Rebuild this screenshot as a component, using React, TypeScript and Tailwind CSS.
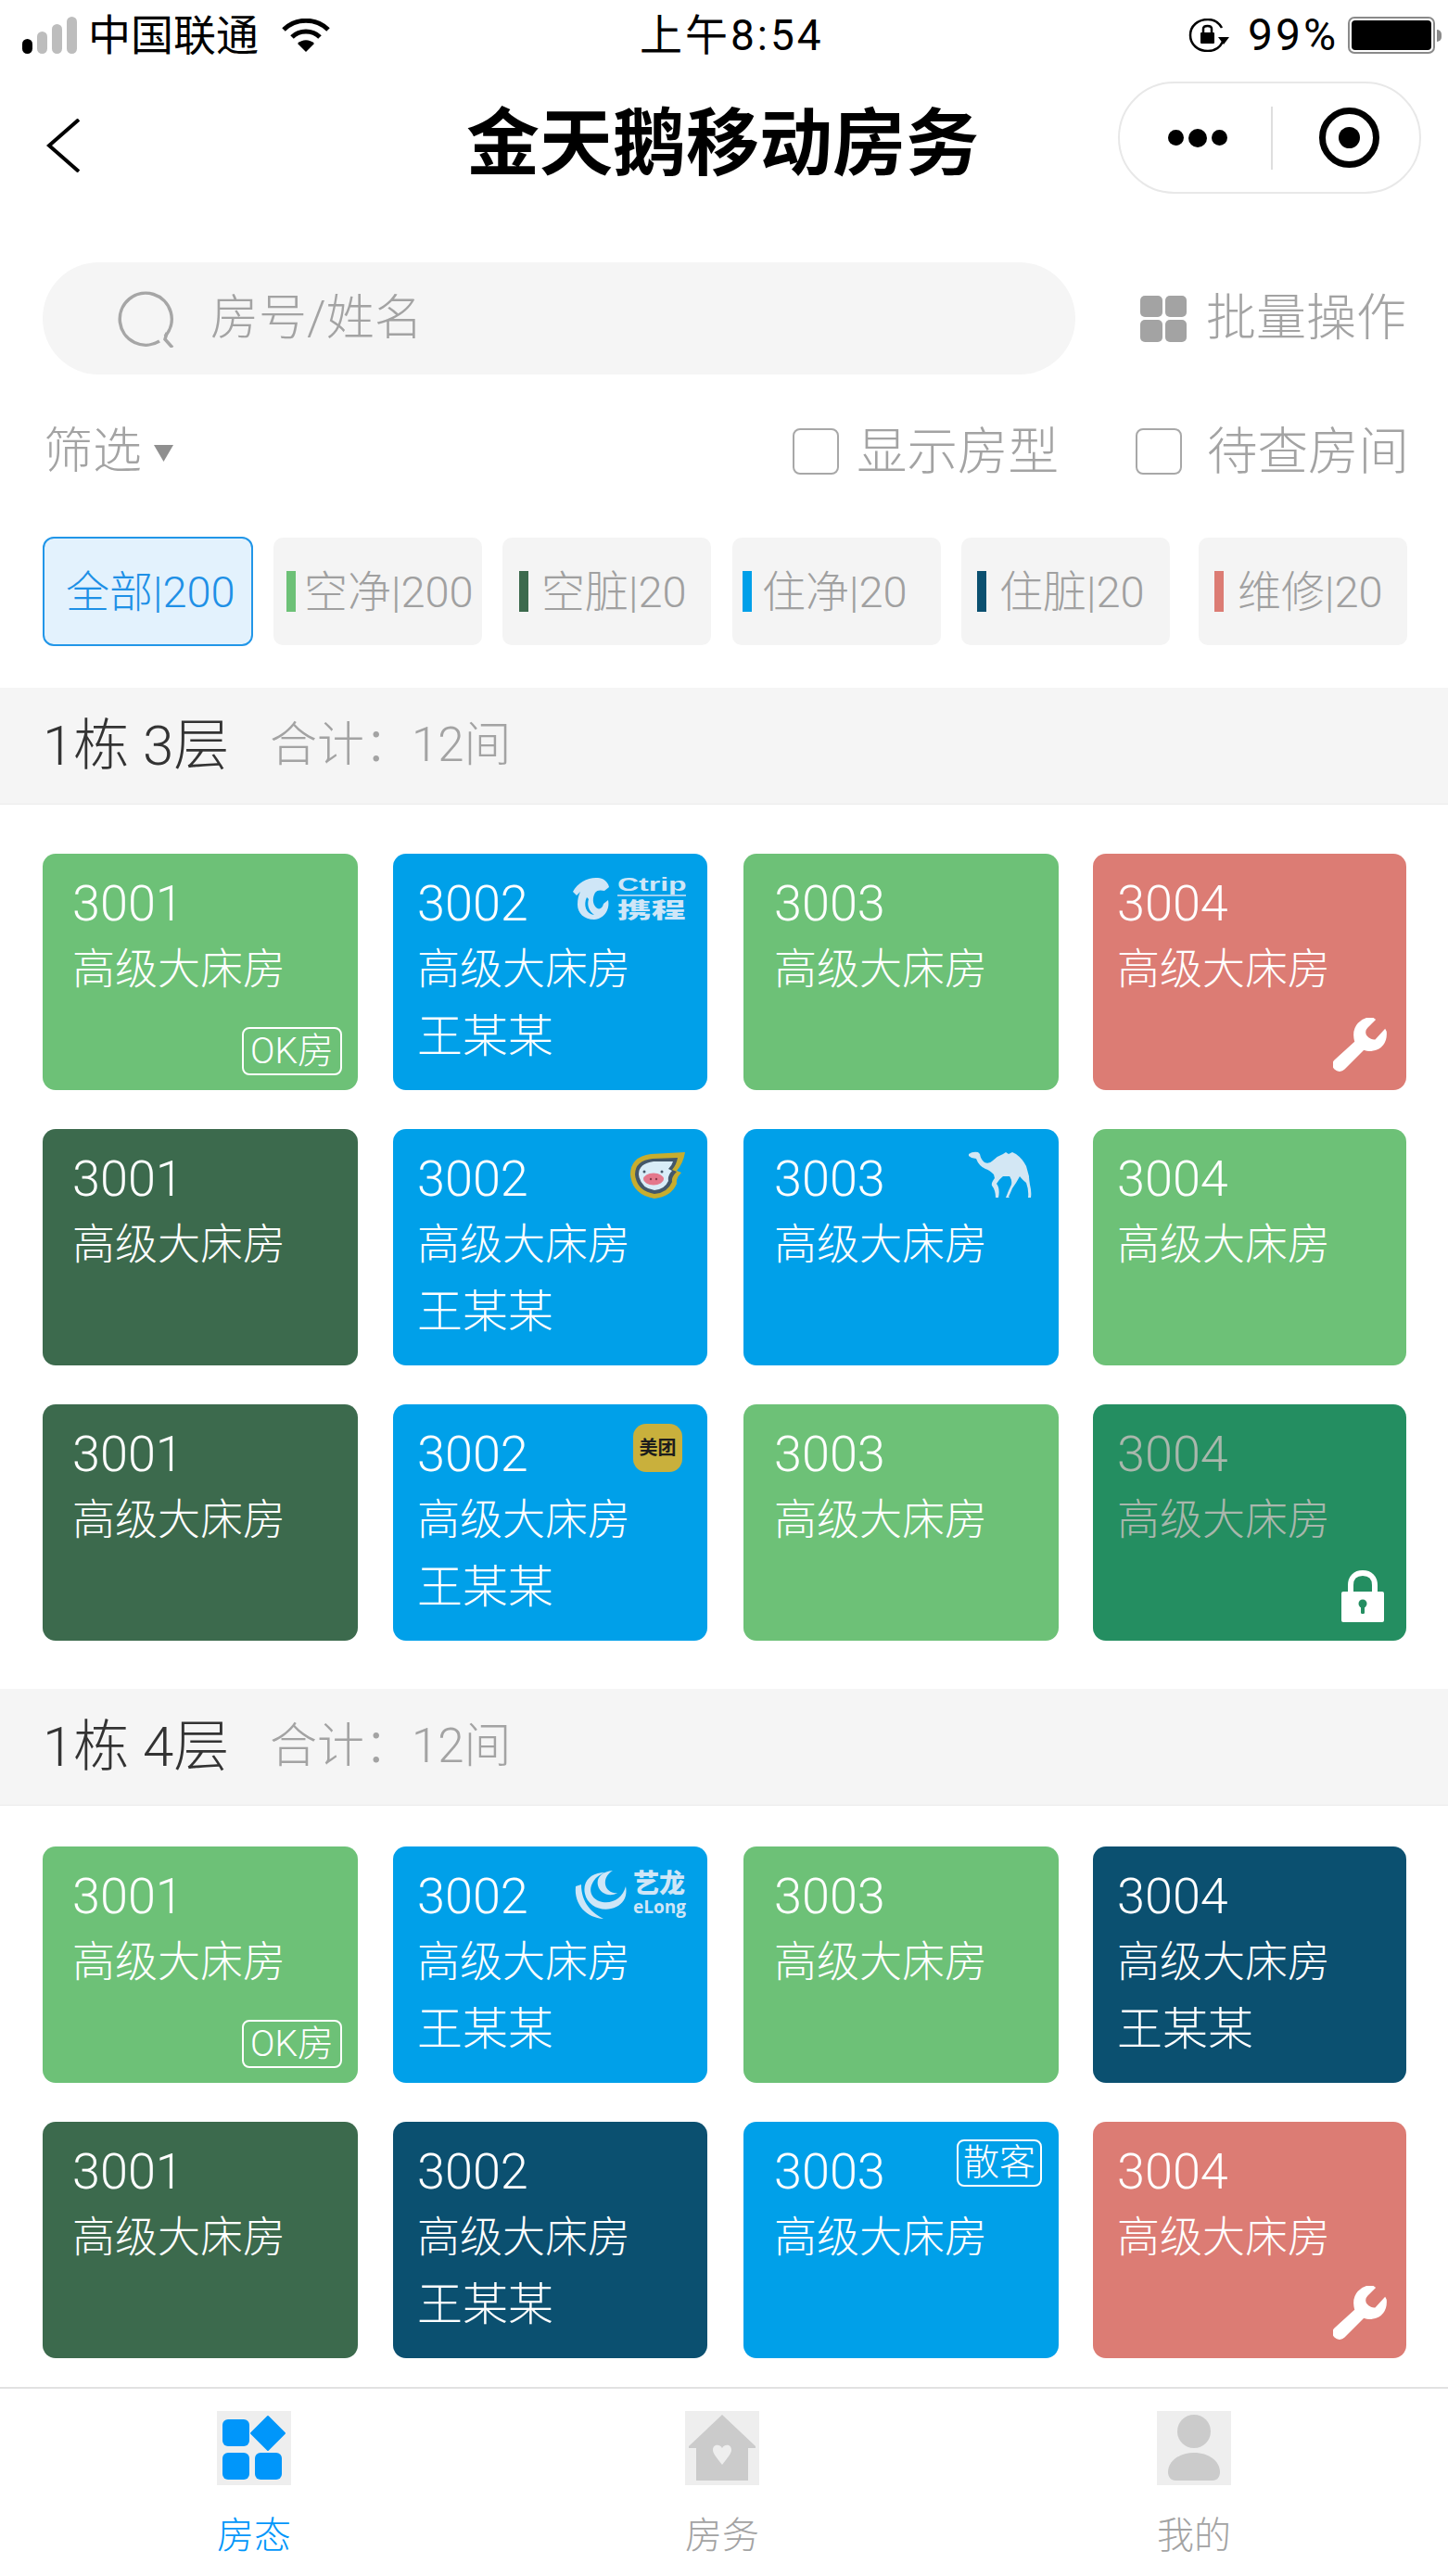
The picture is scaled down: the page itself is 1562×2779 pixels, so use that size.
import React from "react";

const cols = ["w-[340px] pl-[32px]", "w-[339px] pl-[26px]", "w-[340px] pl-[33px]", "w-[338px] pl-[26px]"];

function Wrench() {
  return (
    <svg viewBox="0 0 58 58" className="absolute right-[21px] bottom-[20px] w-[58px] h-[58px]">
      <path
        d="M40 0 C30 1 22 9 23 20 C23 23 24 25 24 26 L2 46 C-1 49 0 53 2 55 C5 58 9 58 12 55 L33 34 C36 35 39 36 42 35 C52 34 58 26 57 15 L56 13 L46 24 C43 25 38 23 36 20 C34 17 34 13 37 10 L45 2 C44 1 42 0 40 0 Z"
        fill="#fff"
        stroke="#fff"
        strokeWidth="1.5"
      />
    </svg>
  );
}

function Lock() {
  return (
    <svg viewBox="0 0 46 57" className="absolute right-[24px] bottom-[20px] w-[46px] h-[57px]">
      <path d="M10 26 V17 C10 9 15 4 23 4 C31 4 36 9 36 17 V26" fill="none" stroke="#fff" strokeWidth="6" />
      <rect x="0" y="24" width="46" height="33" rx="2" fill="#fff" />
      <circle cx="23" cy="37" r="4.5" fill="#248e61" />
      <rect x="21" y="38" width="4" height="10" rx="1.5" fill="#248e61" />
    </svg>
  );
}

function Ctrip() {
  return (
    <div className="absolute top-[25px] right-[22px] w-[124px] h-[46px] text-[#cfe6f7]">
      <svg viewBox="0 0 42 46" className="absolute left-0 top-0 w-[42px] h-[46px]">
        <path
          d="M1 16 C6 6 18 0 28 1 C33 1 39 5 40 11 L35 15 C31 14 27 14 25 17 C22 22 22 29 26 33 C29 36 33 34 34 29 L39 25 C41 34 36 45 24 46 C13 46 6 39 6 30 C6 24 7 20 9 16 L5 20 Z"
          fill="#cfe6f7"
        />
        <path d="M16 22 C12 30 15 40 24 41 C18 37 16 30 18 24 Z" fill="#00a0e9" />
      </svg>
      <span className="absolute left-[49px] top-0 text-[20px] leading-[17px] font-bold font-['Liberation_Sans',sans-serif] origin-left scale-x-[1.6]">Ctrip</span>
      <div className="absolute left-[49px] top-[19px] w-[74px] h-[2px] bg-[#9fd2f2]" />
      <span className="absolute left-[49px] top-[22px] text-[23px] leading-[24px] font-black font-['Noto_Sans_CJK_SC',sans-serif] origin-left scale-x-[1.6] whitespace-nowrap">携程</span>
    </div>
  );
}

function Elong() {
  return (
    <div className="absolute top-[25px] right-[22px] w-[122px] h-[54px] text-[#cfe6f7]">
      <svg viewBox="0 0 60 54" className="absolute left-0 top-0 w-[60px] h-[54px]">
        <path d="M2 18 C0 38 14 52 32 53 C20 47 8 36 8 16 Z" fill="#cfe6f7" />
        <path d="M34 3 C18 3 9 13 12 26 C15 40 32 47 46 40 C54 36 58 28 56 18 C53 30 42 37 31 35 C21 33 16 25 19 17 C22 9 28 5 34 3 Z" fill="#cfe6f7" />
        <path d="M42 1 C30 2 24 9 26 17 C28 26 39 30 47 25 C41 26 35 22 34 16 C33 9 37 4 42 1 Z" fill="#cfe6f7" />
      </svg>
      <span className="absolute left-[64px] -top-[1px] text-[28px] leading-[28px] font-black font-['Noto_Sans_CJK_SC',sans-serif] whitespace-nowrap">艺龙</span>
      <span className="absolute left-[64px] top-[28px] text-[19px] leading-[24px] font-bold font-['Open_Sans',sans-serif]">eLong</span>
    </div>
  );
}

function Pig() {
  const wing = "M59 0 L22 2 Q0 5 0 24 Q2 46 26 50 Q44 48 50 34 Q49 28 55 22 L50 20 Q57 12 59 0 Z";
  return (
    <svg viewBox="0 0 60 50" className="absolute top-[25px] right-[23px] w-[60px] h-[50px]">
      <path d={wing} fill="#c8ad2e" />
      <path d="M51 6 L24 7 Q5 9 5 24 Q7 42 26 45 Q40 44 45 32 Q44 27 50 21 L45 19 Q50 13 51 6 Z" fill="#44586a" />
      <path d="M46 10 L25 10 Q9 12 9 24 Q11 39 26 41 Q37 40 41 31 Q40 25 45 20 L41 18 Q45 14 46 10 Z" fill="#d9edf8" />
      <ellipse cx="25" cy="29" rx="11" ry="6.5" fill="#e4788c" />
      <circle cx="15" cy="21" r="1.5" fill="#44586a" />
      <circle cx="34" cy="21" r="1.5" fill="#44586a" />
      <circle cx="22" cy="29" r="1.2" fill="#8b3a4b" />
      <circle cx="28" cy="29" r="1.2" fill="#8b3a4b" />
    </svg>
  );
}

function Camel() {
  return (
    <svg viewBox="0 0 68 50" className="absolute top-[24px] right-[29px] w-[68px] h-[50px]">
      <path
        d="M0 3 Q4 0 10 1 L12 3 Q13 9 17 12 Q22 14 26 10 Q31 5 37 3 L40 1 L43 3 L47 1 L51 3 Q58 8 62 16 L65 27 Q65 30 66 36 Q68 44 67 50 L64 50 Q65 42 62 34 Q58 31 55 27 Q52 33 47 40 Q45 45 43 49 L44 50 L40 50 Q43 42 46 36 Q47 31 44 27 L37 27 Q33 30 30 35 Q34 40 32 50 L29 50 Q29 42 25 37 Q24 34 28 29 L27 25 Q22 20 18 19 Q11 16 8 8 L3 7 L0 5 Z"
        fill="#d3e7f4"
      />
    </svg>
  );
}

function Meituan() {
  return (
    <div className="absolute top-[21px] right-[27px] w-[53px] h-[52px] rounded-[14px] bg-[#c9b03c] flex items-center justify-center text-[#1d1d1d] text-[20px] font-bold leading-none whitespace-nowrap">
      美团
    </div>
  );
}

function OutlineBadge({ text, place }: { text: string; place: string }) {
  return (
    <div className={`absolute ${place} border-2 border-white rounded-[8px] flex items-center justify-center text-white text-[39px] leading-none whitespace-nowrap`}>
      {text}
    </div>
  );
}

type CardData = { no: string; bg: string; name?: boolean; extra?: React.ReactNode; dim?: boolean };

function Card({ no, bg, name, extra, dim, col }: CardData & { col: number }) {
  return (
    <div className={`relative h-[255px] rounded-[14px] pt-[18px] ${bg} ${cols[col]} ${dim ? "text-[#a9b7ac]" : "text-white"}`}>
      <div className="h-[71px] leading-[71px] text-[54px]">{no}</div>
      <div className="h-[71px] leading-[71px] text-[46px]">高级大床房</div>
      {name && <div className="h-[71px] leading-[71px] text-[49px] mt-[2px]">王某某</div>}
      {extra}
    </div>
  );
}

const G = "bg-[#6dc177]";
const B = "bg-[#00a0e9]";
const D = "bg-[#3c6a4d]";
const N = "bg-[#0b5070]";
const R = "bg-[#dc7c74]";

const ok = <OutlineBadge text="OK房" place="right-[17px] bottom-[16px] w-[108px] h-[52px]" />;

const floor1: CardData[] = [
  { no: "3001", bg: G, extra: ok },
  { no: "3002", bg: B, name: true, extra: <Ctrip /> },
  { no: "3003", bg: G },
  { no: "3004", bg: R, extra: <Wrench /> },
  { no: "3001", bg: D },
  { no: "3002", bg: B, name: true, extra: <Pig /> },
  { no: "3003", bg: B, extra: <Camel /> },
  { no: "3004", bg: G },
  { no: "3001", bg: D },
  { no: "3002", bg: B, name: true, extra: <Meituan /> },
  { no: "3003", bg: G },
  { no: "3004", bg: "bg-[#248e61]", dim: true, extra: <Lock /> },
];

const floor2: CardData[] = [
  { no: "3001", bg: G, extra: ok },
  { no: "3002", bg: B, name: true, extra: <Elong /> },
  { no: "3003", bg: G },
  { no: "3004", bg: N, name: true },
  { no: "3001", bg: D },
  { no: "3002", bg: N, name: true },
  { no: "3003", bg: B, extra: <OutlineBadge text="散客" place="right-[18px] top-[19px] w-[92px] h-[51px]" /> },
  { no: "3004", bg: R, extra: <Wrench /> },
];

function Section({ title, cards, gridPad }: { title: string; cards: CardData[]; gridPad: string }) {
  return (
    <section>
      <div className="h-[126px] bg-[#f5f5f5] border-b border-[#ebebeb] pl-[46px] flex items-center">
        <span className="text-[60px] text-[#333] w-[245px] whitespace-pre">{title}</span>
        <span className="text-[51px] text-[#a3a3a3]">合计：12间</span>
      </div>
      <div className={`pl-[46px] ${gridPad} grid grid-cols-[378px_378px_377px_338px] gap-y-[42px]`}>
        {cards.map((c, i) => (
          <Card key={i} {...c} col={i % 4} />
        ))}
      </div>
    </section>
  );
}

const tabs = [
  { label: "空净|200", bar: "bg-[#6dc177]", cls: "ml-[22px] pl-[14px] gap-[9px]" },
  { label: "空脏|20", bar: "bg-[#3c6a4d]", cls: "ml-[22px] pl-[18px] gap-[14px]" },
  { label: "住净|20", bar: "bg-[#00a0e9]", cls: "ml-[23px] pl-[11px] gap-[11px]" },
  { label: "住脏|20", bar: "bg-[#0b5070]", cls: "ml-[22px] pl-[17px] gap-[14px]" },
  { label: "维修|20", bar: "bg-[#dc7c74]", cls: "ml-[31px] pl-[17px] gap-[15px]" },
];

function StatusBar() {
  return (
    <div className="h-[76px] relative flex items-center justify-between pl-[24px] pr-[7px] text-black text-[46px] font-normal">
      <div className="flex items-center">
        <div className="flex items-end gap-[5px] h-[40px] mr-[12px]">
          <div className="w-[11px] h-[16px] rounded-full bg-black" />
          <div className="w-[11px] h-[24px] rounded-full bg-[#bdbdbd]" />
          <div className="w-[11px] h-[32px] rounded-full bg-[#bdbdbd]" />
          <div className="w-[11px] h-[40px] rounded-full bg-[#bdbdbd]" />
        </div>
        <span className="leading-none">中国联通</span>
        <svg viewBox="0 0 54 36" className="w-[54px] h-[36px] ml-[24px]">
          <path d="M3 12 C16 -1 38 -1 51 12" fill="none" stroke="#000" strokeWidth="5" />
          <path d="M12 20 C20 12 34 12 42 20" fill="none" stroke="#000" strokeWidth="5" />
          <path d="M27 36 L18 27 C23 22 31 22 36 27 Z" fill="#000" />
        </svg>
      </div>
      <span className="absolute left-[690px] leading-none tracking-[3px]">上午8:54</span>
      <div className="flex items-center">
        <svg viewBox="0 0 44 36" className="w-[44px] h-[36px] mr-[20px]">
          <path d="M36 10 C32 3 26 1 21 1 C10 1 2 8 2 18 C2 28 10 35 21 35 C28 35 34 31 37 25" fill="none" stroke="#000" strokeWidth="2.5" />
          <rect x="13" y="15" width="15" height="12" rx="1" fill="#000" />
          <path d="M16 15 V11 C16 7 25 7 25 11 V15" fill="none" stroke="#000" strokeWidth="2.5" />
          <path d="M32 20 L44 20 L38 28 Z" fill="#000" />
        </svg>
        <span className="leading-none text-[48px] w-[108px] tracking-[3px]">99%</span>
        <div className="w-[94px] h-[40px] rounded-[7px] border-2 border-[#8a8a8a] p-[2px]">
          <div className="w-full h-full rounded-[4px] bg-black" />
        </div>
        <div className="w-[5px] h-[13px] ml-[2px] rounded-r-full bg-[#8a8a8a]" />
      </div>
    </div>
  );
}

function NavBar() {
  return (
    <div className="h-[144px] relative flex items-center justify-center">
      <svg viewBox="0 0 36 58" className="absolute left-[50px] top-[52px] w-[36px] h-[58px]">
        <path d="M35 1 L3 29 L35 57" fill="none" stroke="#000" strokeWidth="4" />
      </svg>
      <h1 className="text-[79px] font-bold text-black leading-none font-['Noto_Sans_CJK_SC',sans-serif] pr-[3px]">金天鹅移动房务</h1>
      <div className="absolute right-[29px] top-[12px] w-[327px] h-[121px] rounded-full border-2 border-[#e8e8e8] flex items-center pl-[52px]">
        <div className="flex items-center gap-[5px] w-[111px]">
          <div className="w-[17px] h-[17px] rounded-full bg-black" />
          <div className="w-[20px] h-[20px] rounded-full bg-black" />
          <div className="w-[17px] h-[17px] rounded-full bg-black" />
        </div>
        <div className="w-[2px] h-[68px] bg-[#dedede]" />
        <div className="ml-[50px] w-[65px] h-[65px] rounded-full border-[7px] border-black flex items-center justify-center">
          <div className="w-[23px] h-[23px] rounded-full bg-black" />
        </div>
      </div>
    </div>
  );
}

function NavItem({ label, active, children, cls }: { label: string; active?: boolean; children: React.ReactNode; cls: string }) {
  return (
    <div className={`absolute top-[24px] ${cls} w-[80px] flex flex-col items-center`}>
      <svg viewBox="0 0 80 80" className="w-[80px] h-[80px] bg-[#eeeeee]">
        {children}
      </svg>
      <span className={`mt-[30px] text-[40px] leading-[50px] whitespace-nowrap ${active ? "text-[#0096fa]" : "text-[#a3a3a3]"}`}>{label}</span>
    </div>
  );
}

export default function App() {
  return (
    <div className="w-[1562px] h-[2779px] bg-white overflow-hidden flex flex-col font-light font-[Roboto,'Noto_Sans_CJK_SC',sans-serif]">
      <StatusBar />
      <NavBar />

      <div className="pl-[46px] pr-[40px] mt-[63px] flex items-center">
        <div className="w-[1114px] h-[121px] rounded-full bg-[#f5f5f5] flex items-center pl-[80px]">
          <svg viewBox="0 0 62 62" className="w-[62px] h-[62px]">
            <path d="M46 55 A28 28 0 1 1 52 50" fill="none" stroke="#a6a6a6" strokeWidth="3.5" />
            <path d="M54 46 L52 53 L60 62" fill="none" stroke="#a6a6a6" strokeWidth="3.5" />
          </svg>
          <span className="ml-[39px] text-[52px] text-[#a3a3a3] leading-none">房号/姓名</span>
        </div>
        <div className="ml-[70px] grid grid-cols-2 gap-[3px] w-[50px] h-[50px]">
          <div className="rounded-[5px] bg-[#a3a3a3]" />
          <div className="rounded-[5px] bg-[#a3a3a3]" />
          <div className="rounded-[5px] bg-[#a3a3a3]" />
          <div className="rounded-[5px] bg-[#a3a3a3]" />
        </div>
        <span className="ml-[21px] text-[54px] text-[#a3a3a3] leading-none whitespace-nowrap">批量操作</span>
      </div>

      <div className="mt-[58px] pl-[47px] pr-[40px] h-[50px] flex items-center text-[53px] text-[#a3a3a3] leading-none">
        <span>筛选</span>
        <svg viewBox="0 0 21 18" className="w-[21px] h-[18px] ml-[13px] mt-[4px]">
          <path d="M0 0 H21 L10.5 18 Z" fill="#8f8f8f" />
        </svg>
        <div className="ml-[668px] w-[50px] h-[50px] rounded-[8px] border-2 border-[#a8a8a8]" />
        <span className="ml-[19px] text-[54.5px]">显示房型</span>
        <div className="ml-[83px] w-[50px] h-[50px] rounded-[8px] border-2 border-[#a8a8a8]" />
        <span className="ml-[27px] text-[54.5px]">待查房间</span>
      </div>

      <div className="mt-[67px] pl-[46px] flex items-center">
        <div className="w-[227px] h-[118px] rounded-[12px] bg-[#e3f2fd] border-2 border-[#2196e8] flex items-center pl-[23px] text-[#1e90e6] text-[47px] leading-none whitespace-nowrap">
          全部|200
        </div>
        {tabs.map((t) => (
          <div key={t.label} className={`w-[225px] h-[116px] rounded-[10px] bg-[#f4f4f4] flex items-center text-[#a0a0a0] text-[47px] leading-none whitespace-nowrap ${t.cls}`}>
            <div className={`w-[10px] h-[44px] shrink-0 ${t.bar}`} />
            <span>{t.label}</span>
          </div>
        ))}
      </div>

      <div className="mt-[45px]">
        <Section title="1栋 3层" cards={floor1} gridPad="pt-[53px] pb-[52px]" />
        <Section title="1栋 4层" cards={floor2} gridPad="pt-[44px]" />
      </div>

      <div className="mt-[31px] flex-1 relative border-t-2 border-[#e2e2e2] bg-white">
        <NavItem label="房态" active cls="left-[234px]">
          <rect x="6" y="9" width="29" height="29" rx="6" fill="#0096fa" />
          <path d="M55 6 L73 24 L55 42 L37 24 Z" fill="#0096fa" stroke="#0096fa" strokeWidth="2" strokeLinejoin="round" />
          <rect x="6" y="45" width="29" height="29" rx="6" fill="#0096fa" />
          <rect x="41" y="45" width="29" height="29" rx="6" fill="#0096fa" />
        </NavItem>
        <NavItem label="房务" cls="left-[739px]">
          <path d="M40 4 L76 38 L76 40 L68 40 L68 75 L12 75 L12 40 L4 40 L4 38 Z" fill="#cbcbcb" />
          <path d="M40 58 C34 50 30 46 30 42 C30 36 37 35 40 40 C43 35 50 36 50 42 C50 46 46 50 40 58 Z" fill="#eeeeee" />
        </NavItem>
        <NavItem label="我的" cls="left-[1248px]">
          <circle cx="40" cy="22" r="18" fill="#cbcbcb" />
          <path d="M12 66 C12 54 24 45 40 45 C56 45 68 54 68 66 C68 71 65 75 60 75 L20 75 C15 75 12 71 12 66 Z" fill="#cbcbcb" />
        </NavItem>
      </div>
    </div>
  );
}
